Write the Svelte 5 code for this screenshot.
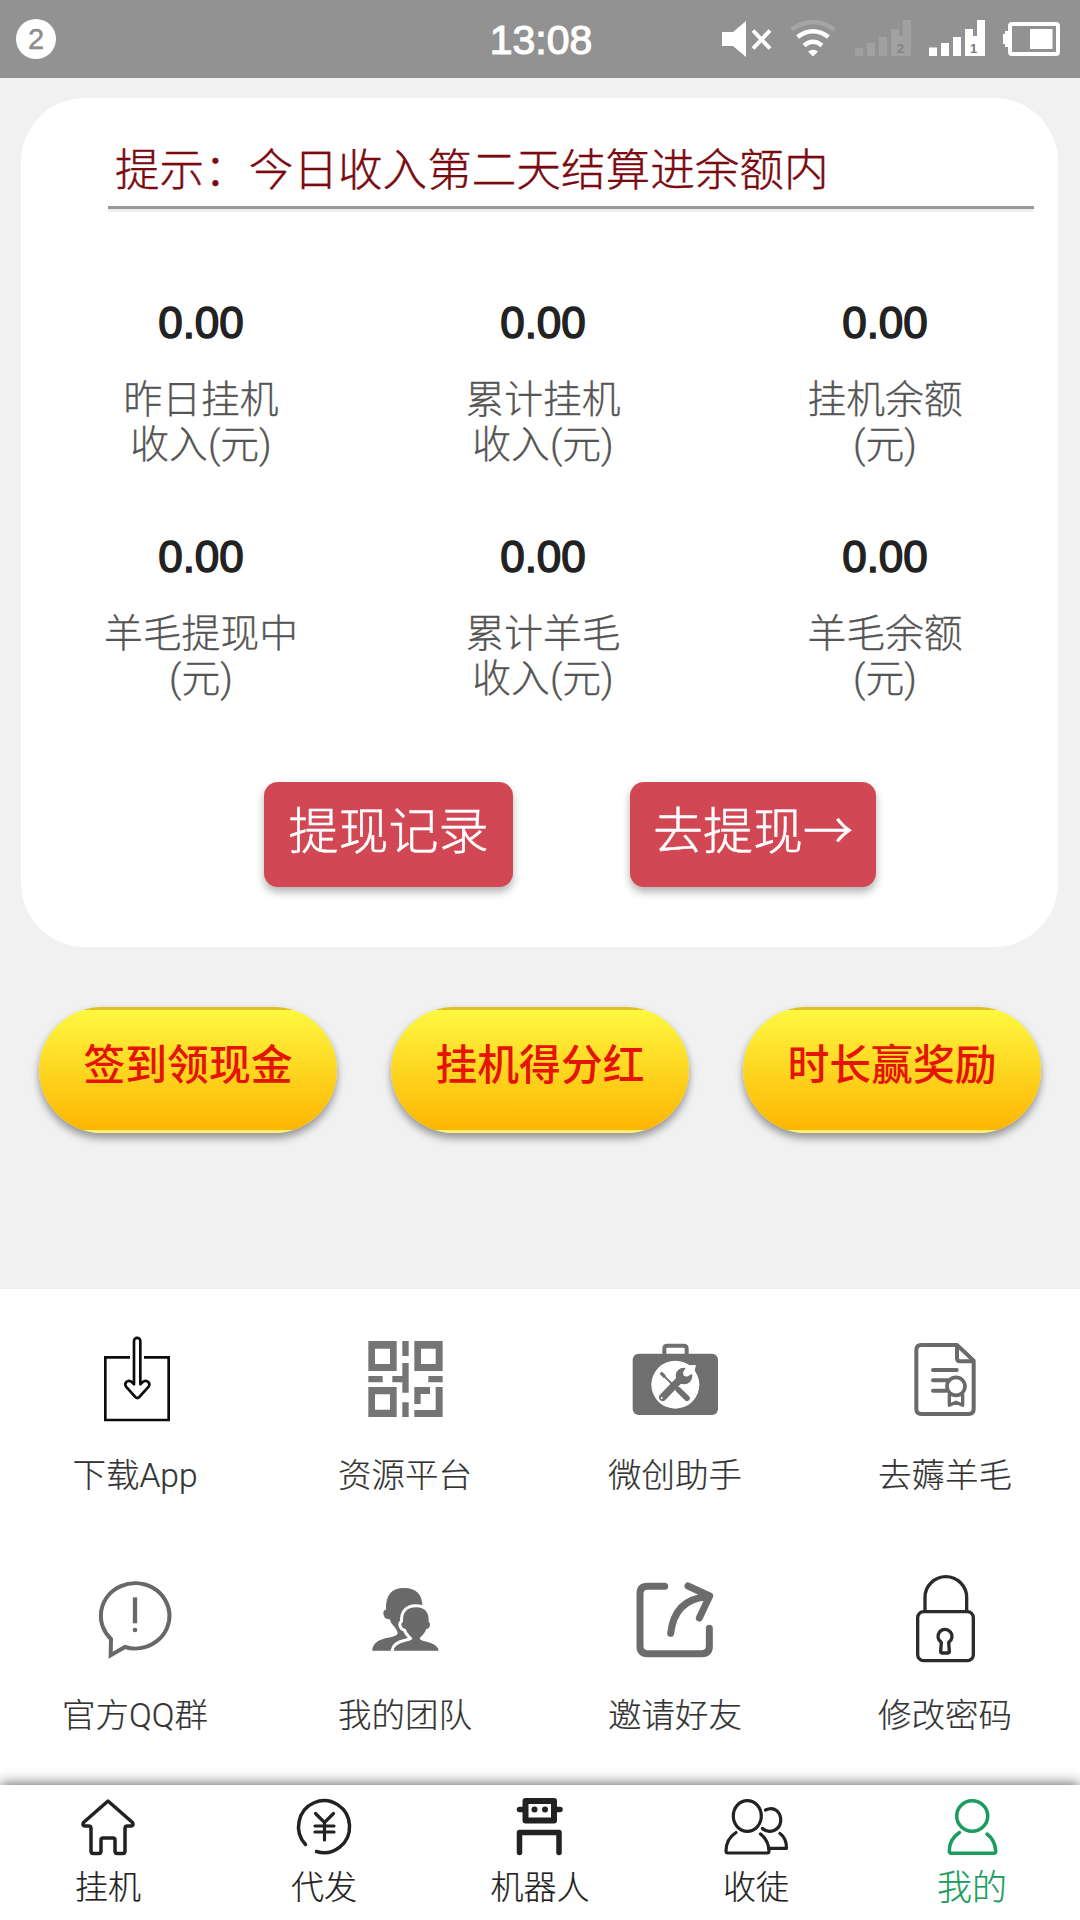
<script lang="ts">
interface Stat {
    value: string;
    lines: string[];
}

interface NavItem {
    id: string;
    label: string;
}

let stats: Stat[] = [
    { value: '0.00', lines: ['昨日挂机', '收入(元)'] },
    { value: '0.00', lines: ['累计挂机', '收入(元)'] },
    { value: '0.00', lines: ['挂机余额', '(元)'] },
    { value: '0.00', lines: ['羊毛提现中', '(元)'] },
    { value: '0.00', lines: ['累计羊毛', '收入(元)'] },
    { value: '0.00', lines: ['羊毛余额', '(元)'] }
];

let rewards = ['签到领现金', '挂机得分红', '时长赢奖励'];

let tools: NavItem[] = [
    { id: 'download', label: '下载App' },
    { id: 'qrcode', label: '资源平台' },
    { id: 'toolbox', label: '微创助手' },
    { id: 'document', label: '去薅羊毛' },
    { id: 'chat', label: '官方QQ群' },
    { id: 'team', label: '我的团队' },
    { id: 'share', label: '邀请好友' },
    { id: 'lock', label: '修改密码' }
];

let tabs: NavItem[] = [
    { id: 'home', label: '挂机' },
    { id: 'yuan', label: '代发' },
    { id: 'robot', label: '机器人' },
    { id: 'users', label: '收徒' },
    { id: 'me', label: '我的' }
];

let activeTab = 'me';
</script>

<div class="page">
    <header class="status-bar">
        <span class="badge">2</span>
        <span class="clock">13:08</span>
        <svg class="status-icons" viewBox="714 0 352 78" fill="#fff">
            <!-- muted speaker -->
            <path d="M722 32h11l13-11v36l-13-11h-11z"/>
            <path d="M753 30.500l17 18M770 30.500l-17 18" stroke="#fff" stroke-width="4"/>
            <!-- wifi -->
            <g fill="none" stroke="#fff" stroke-width="4.500">
                <path d="M791.500 29.500q21.500-15 43 0" opacity=".18"/>
                <path d="M797.500 37q15.500-11.500 31 0"/>
                <path d="M804 45.500q9-7.500 18 0"/>
            </g>
            <path d="M808 51.500q5-3.500 10 0l-5 5z"/>
            <!-- sim 2, no signal -->
            <g opacity=".14">
                <path d="M855 48h8v8h-8zM867 43h8v13h-8zM879 37h8v19h-8zM891 29h8v27h-8zM903 20h8v36h-8zM899 36h4v20h-4z"/>
            </g>
            <text x="897" y="53" class="sim" fill="#848484">2</text>
            <!-- sim 1 -->
            <path d="M929 47.500h8v8.500h-8zM941 43h8v13h-8zM953 37h8v19h-8zM965 29h8v27h-8zM977 20h8v36h-8zM973 36h4v20h-4z"/>
            <text x="970" y="53" class="sim" fill="#777">1</text>
            <!-- battery -->
            <rect x="1010" y="24" width="48" height="30" rx="2" fill="none" stroke="#fff" stroke-width="4"/>
            <path d="M1008 31h-3v3h-2v10h2v3h3zM1030 29h22.500v20h-22.500z"/>
        </svg>
    </header>

    <section class="card">
        <p class="tip">提示：今日收入第二天结算进余额内</p>
        <div class="stats">
            {#each stats as stat}
                <div class="stat">
                    <strong>{stat.value}</strong>
                    {#each stat.lines as line}
                        <span>{line}</span>
                    {/each}
                </div>
            {/each}
        </div>
        <div class="actions">
            <button class="record">提现记录</button>
            <button class="withdraw">去提现→</button>
        </div>
    </section>

    <section class="rewards">
        {#each rewards as reward}
            <button>{reward}</button>
        {/each}
    </section>

    <section class="tools">
        {#each tools as tool}
            <div class="tool">
                <svg viewBox="0 0 288 288" fill="none" stroke-linecap="round" stroke-linejoin="round">
                    {#if tool.id === 'download'}
                        <g stroke="#0c0c0c" stroke-width="8">
                            <path d="M129 82H55V270H245V82H171" stroke-linecap="butt" stroke-linejoin="miter"/>
                            <path d="M141 163V33a9.500 9.500 0 0 1 19 0V163l10-9q8-4 14 2t1 14l-28 31q-6 6-12 0l-28-31q-5-8 1-14t14-2z"/>
                        </g>
                    {:else if tool.id === 'qrcode'}
                        <path fill="#757575" fill-rule="evenodd" d="M34 33H119V123H34zM54 56V102H99V56zM172 33H257V123H172zM192 56V102H236V56zM34 171H119V261H34zM54 193V239H99V193zM136 33h19v45h-19zM136 99h19v89h-19V157H106V138H136zM34 138H77v19H34zM214 138h43v19H214zM136 217h19v44h-19zM172 171h47v21H191v30H172zM236 171h21v90H172V240h64z"/>
                    {:else if tool.id === 'toolbox'}
                        <rect x="17" y="71" width="256" height="184" rx="18" fill="#6f6f6f"/>
                        <path d="M112 76V56q0-9 9-9h49q9 0 9 9v20" stroke="#6f6f6f" stroke-width="12"/>
                        <circle cx="145" cy="164" r="72" fill="#fff"/>
                        <g stroke="#6f6f6f">
                            <path d="M104 131l44 44" stroke-width="6"/>
                            <path d="M104 131l7 7" stroke-width="10"/>
                            <path d="M154 179l26 26" stroke-width="17"/>
                            <path d="M107 202l52-54" stroke-width="22"/>
                        </g>
                        <circle cx="171" cy="138" r="25" fill="#6f6f6f"/>
                        <path d="M181 106L168 127l2 10 9 3 22-11 6-24z" fill="#fff"/>
                        <circle cx="104" cy="204" r="3" fill="#fff"/>
                    {:else if tool.id === 'document'}
                        <g stroke="#6a6a6a" stroke-width="12">
                            <path d="M180 45H73q-15 0-15 15V237q0 15 15 15H215q15 0 15-15V92L180 45V85q0 9 9 9H230"/>
                            <path d="M108 120H179M108 151h44M108 182h39"/>
                            <path d="M157 194V226l20-9 20 9V194" stroke-width="10"/>
                            <circle cx="177" cy="169" r="27" fill="#fff" stroke-width="11"/>
                        </g>
                    {:else if tool.id === 'chat'}
                        <path d="M72 207A103 98 0 1 1 114 231L71 256Z" stroke="#686868" stroke-width="12" stroke-linejoin="miter"/>
                        <path d="M144 82V160" stroke="#686868" stroke-width="13" stroke-linecap="butt"/>
                        <circle cx="144" cy="180" r="7" fill="#686868"/>
                    {:else if tool.id === 'team'}
                        <path fill="#6a6a6a" d="M46 242Q46 215 85 205Q122 199 122 190Q122 182 112 170Q100 158 98 148Q80 148 79 130Q79 120 87 119Q84 54 141 54Q197 54 196 112L150 150L160 205L110 242Z"/>
                        <path class="front" fill="#6a6a6a" d="M110 242Q112 222 145 215Q166 212 166 204Q150 190 146 177Q136 176 133 165Q133 158 138 156Q136 112 177 112Q217 112 215 156Q220 158 219 165Q218 176 208 177Q204 190 188 204Q188 212 209 215Q242 222 245 242Z"/>
                    {:else if tool.id === 'share'}
                        <g stroke="#6c6c6c" stroke-width="21">
                            <path d="M113 49H61q-22 0-22 22V229q0 22 22 22H225q22 0 22-22V175"/>
                            <path d="M183 48L248 78L217 144M131 190Q142 88 240 80"/>
                        </g>
                    {:else}
                        <g stroke="#2b2b2b" stroke-width="10">
                            <path d="M84 122V82a62.500 62 0 0 1 125 0V122"/>
                            <rect x="62" y="125" width="167" height="147" rx="18"/>
                            <path d="M133 217A21 21 0 1 1 155 217L157 244q0 5-4 5H135q-4 0-4-5Z"/>
                        </g>
                    {/if}
                </svg>
                <span>{tool.label}</span>
            </div>
        {/each}
    </section>

    <nav>
        {#each tabs as tab}
            <div class="tab" class:active={tab.id === activeTab}>
                <svg viewBox="0 0 72 64" fill="none" stroke="currentColor" stroke-width="3.500" stroke-linecap="round" stroke-linejoin="round">
                    {#if tab.id === 'home'}
                        <path d="M36 7L11.500 28.500q-1.500 3.500 1 3.500h4q2.500 0 2.500 2.500V57q0 2.500 2.500 2.500h5q2.500 0 2.500-2.500V46q0-2 2-2h10q2 0 2 2V57q0 2.500 2.500 2.500h5q2.500 0 2.500-2.500V34.500q0-2.500 2.500-2.500h4q2.500 0 1-3.500z"/>
                    {:else if tab.id === 'yuan'}
                        <path d="M17.500 50.500A25.500 26 0 1 1 28.500 57.500"/>
                        <path d="M27.500 19.500L36.500 28.500L45.500 19.500M36.500 28.500V46M27 32H46M27 38H46" stroke-width="3.200"/>
                    {:else if tab.id === 'robot'}
                        <rect x="21.500" y="7" width="28.500" height="19.500" stroke-width="6"/>
                        <path d="M15.500 15.500h4M52 15.500h4M15.500 58.500V38.500H55V58.500" stroke-width="5.500"/>
                        <circle cx="30.500" cy="15.500" r="3" fill="currentColor" stroke="none"/>
                        <circle cx="41" cy="15.500" r="3" fill="currentColor" stroke="none"/>
                    {:else if tab.id === 'users'}
                        <g stroke-width="3.200">
                            <ellipse cx="27.300" cy="22" rx="14" ry="15.300"/>
                            <path d="M16 38.500Q6 45 6 57q0 2 2 2H47.500q1.500 0 1.500-2Q48.500 46 40.500 40"/>
                            <path d="M45.500 16Q52 13 56.500 16.500Q61 20 60.700 27Q60 34 54 36.500Q47 39 42.500 34.500"/>
                            <path d="M60 39.500Q66.500 44 66.500 54.300H49"/>
                        </g>
                    {:else}
                        <ellipse cx="36.200" cy="22" rx="15.500" ry="15.300"/>
                        <path d="M23.500 38.500Q13.300 45 13.300 57q0 2.300 2 2.300H57.500q2.500 0 2.300-2.300Q59 46 51 40"/>
                    {/if}
                </svg>
                <span>{tab.label}</span>
            </div>
        {/each}
    </nav>
</div>

<style>
    :global(body) {
        margin: 0;
        background: #f1f1f1;
    }

    .page {
        display: flex;
        flex-direction: column;
        width: 1080px;
        height: 1920px;
        overflow: hidden;
        background: #f1f1f1;
        font-family: 'Noto Sans CJK SC', sans-serif;
        font-weight: 300;
    }

    button {
        border: none;
        padding: 0;
        font-family: inherit;
        cursor: pointer;
    }

    .status-bar {
        display: grid;
        grid-template-columns: 352px 1fr 352px;
        align-items: center;
        height: 78px;
        padding: 0 14px 0 16px;
        background: #929292;
        color: #fff;
        font-family: 'Liberation Sans', sans-serif;
    }

    .badge {
        width: 40px;
        height: 40px;
        border-radius: 50%;
        background: #fff;
        color: #8c8c8c;
        font-size: 29px;
        line-height: 40px;
        text-align: center;
        -webkit-text-stroke: 0.4px #8c8c8c;
    }

    .clock {
        padding-top: 3px;
        font-size: 41px;
        text-align: center;
        -webkit-text-stroke: 1.2px #fff;
    }

    .status-icons {
        width: 352px;
        height: 78px;
    }

    .sim {
        font-size: 13px;
        font-weight: 700;
    }

    .card {
        box-sizing: border-box;
        height: 849px;
        margin: 20px 22px 0 21px;
        padding: 36px 0 0 8px;
        border-radius: 64px;
        background: #fff;
    }

    .tip {
        height: 72px;
        margin: 0 24px 0 79px;
        padding-left: 7px;
        border-bottom: 3px solid #999;
        box-shadow: 0 3px 0 #eee;
        color: #7a0a10;
        font-size: 44.6px;
        line-height: 66px;
        -webkit-text-stroke: 0.4px #7a0a10;
    }

    .stats {
        display: grid;
        grid-template-columns: repeat(3, 342px);
        grid-auto-rows: 234px;
        padding: 84px 0 0 1px;
    }

    .stat {
        display: flex;
        flex-direction: column;
        align-items: center;
        color: #555;
        font-family: Roboto, 'Noto Sans CJK SC', sans-serif;
        font-size: 38.8px;
        line-height: 45px;
        white-space: nowrap;
        -webkit-text-stroke: 0.3px #555;
    }

    .stat strong {
        margin-bottom: 24px;
        color: #222;
        font-family: 'Liberation Sans', sans-serif;
        font-size: 44px;
        font-weight: 400;
        line-height: 60px;
        -webkit-text-stroke: 1.5px #222;
    }

    .actions {
        display: flex;
        gap: 117px;
        padding: 21px 0 0 235px;
    }

    .actions button {
        height: 105px;
        padding-bottom: 16px;
        border-radius: 14px;
        background: #d14754;
        box-shadow: 0 5px 8px rgba(0, 0, 0, 0.3);
        color: #fff;
        font-size: 50px;
        font-weight: 300;
        -webkit-text-stroke: 0.5px #fff;
    }

    .record {
        width: 249px;
    }

    .withdraw {
        width: 246px;
    }

    .rewards {
        display: flex;
        justify-content: space-between;
        box-sizing: border-box;
        height: 342px;
        padding: 60px 39px 0;
    }

    .rewards button {
        width: 298px;
        height: 126px;
        padding-bottom: 17px;
        border-radius: 63px;
        background:
            linear-gradient(#e0c022 3px, transparent 3px, transparent calc(100% - 3px), #fff070 calc(100% - 3px)),
            linear-gradient(#fff942, #fdb400);
        box-shadow: 0 5px 8px rgba(0, 0, 0, 0.4);
        color: #e41400;
        font-size: 41.8px;
        font-weight: 500;
    }

    .tools {
        display: grid;
        grid-template-columns: repeat(4, 1fr);
        grid-auto-rows: 240px;
        box-sizing: border-box;
        height: 496px;
        padding-top: 41px;
        background: #fff;
    }

    .tool {
        display: flex;
        flex-direction: column;
        align-items: center;
        color: #333;
        font-family: Roboto, 'Noto Sans CJK SC', sans-serif;
        font-size: 33.5px;
        -webkit-text-stroke: 0.2px #333;
    }

    .tool svg {
        width: 96px;
        height: 96px;
        margin-bottom: 24px;
    }

    .tool span {
        line-height: 52px;
    }

    .front {
        stroke: #fff;
        stroke-width: 18px;
        paint-order: stroke;
    }

    nav {
        position: relative;
        display: grid;
        grid-template-columns: repeat(5, 1fr);
        height: 135px;
        background: #fff;
        box-shadow: 0 -2px 12px rgba(0, 0, 0, 0.55);
    }

    .tab {
        display: flex;
        flex-direction: column;
        align-items: center;
        padding-top: 9px;
        color: #222;
        font-size: 33px;
        -webkit-text-stroke: 0.2px currentColor;
    }

    .tab svg {
        width: 72px;
        height: 64px;
        margin-bottom: 3px;
    }

    .tab span {
        line-height: 48px;
    }

    .active {
        color: #1a9c5c;
    }

    .active span {
        font-size: 35px;
    }
</style>
